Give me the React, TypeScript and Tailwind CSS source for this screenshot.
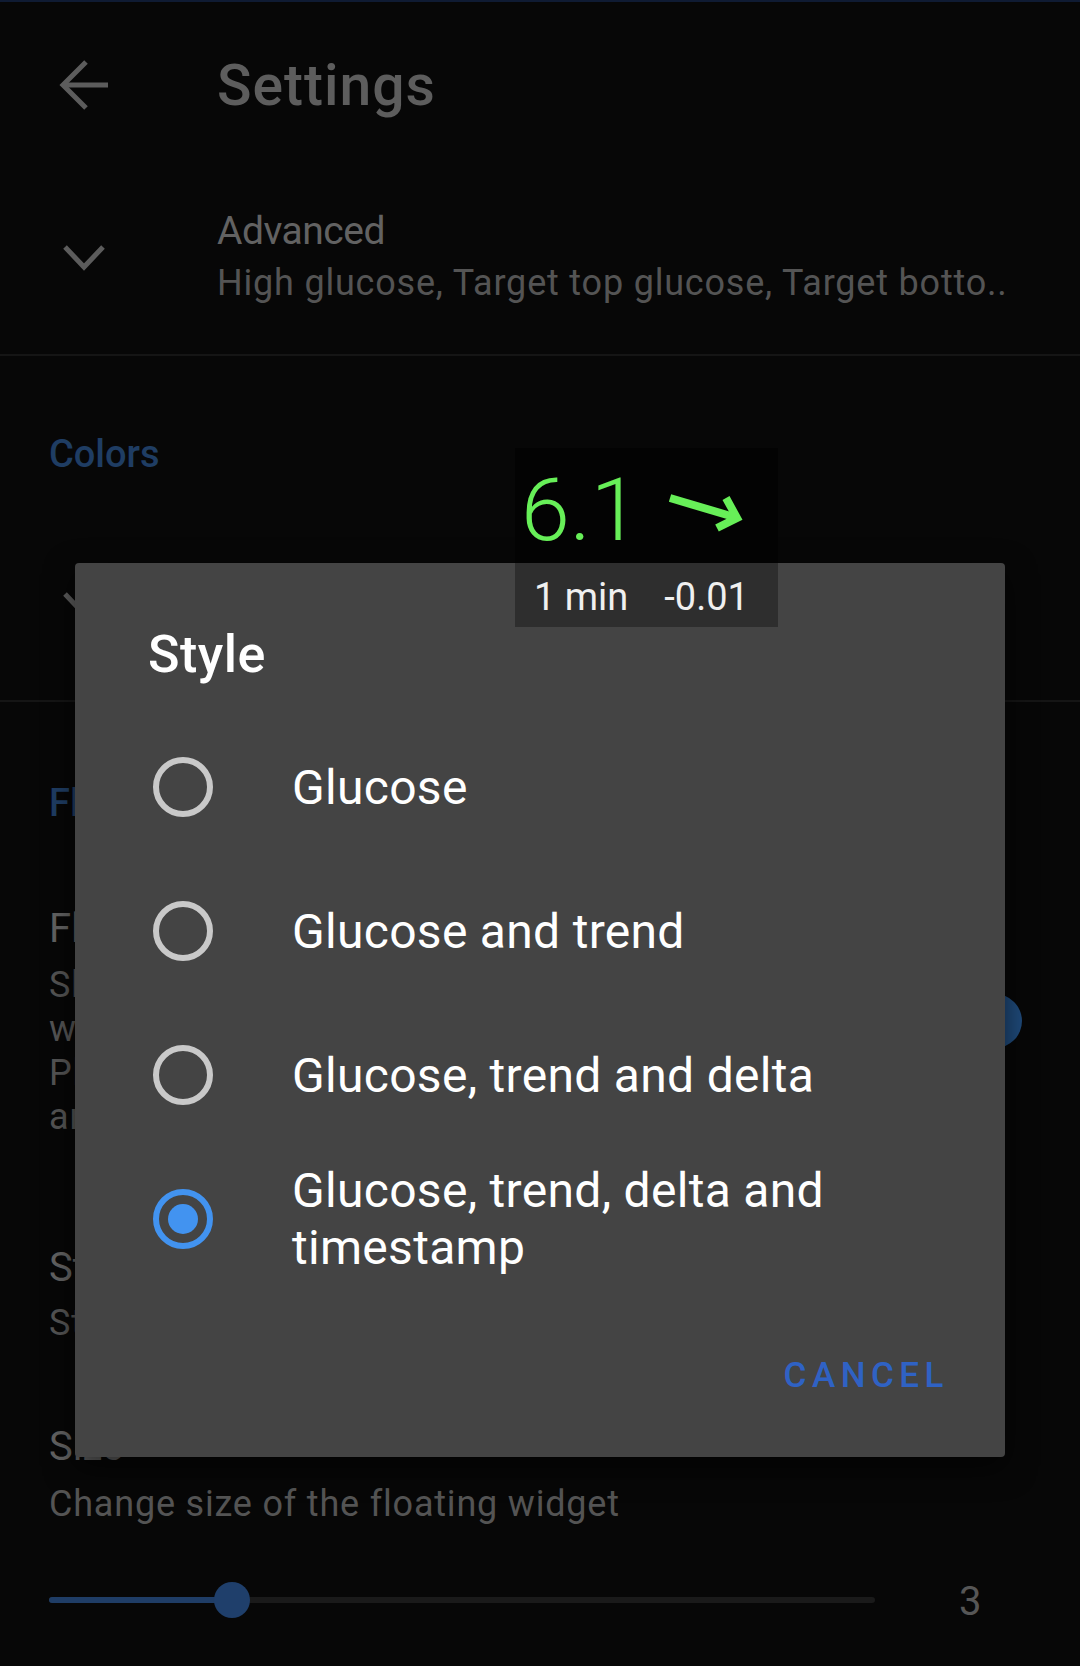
import React from "react";

function BackArrow() {
  return (
    <svg width="56" height="56" viewBox="0 0 56 56" fill="none">
      <path d="M52 28 H8" stroke="#5c5c5c" strokeWidth="5" />
      <path d="M30 5 L7 28 L30 51" stroke="#5c5c5c" strokeWidth="5" fill="none" />
    </svg>
  );
}

function ChevronDown() {
  return (
    <svg width="46" height="30" viewBox="0 0 46 30" fill="none">
      <path d="M4 5 L23 25 L42 5" stroke="#5c5c5c" strokeWidth="5" fill="none" />
    </svg>
  );
}

function Radio({ checked }: { checked?: boolean }) {
  if (checked) {
    return (
      <div className="w-[60px] h-[60px] rounded-full border-[6px] border-[#4293f0] flex items-center justify-center shrink-0">
        <div className="w-[30px] h-[30px] rounded-full bg-[#4293f0]" />
      </div>
    );
  }
  return <div className="w-[60px] h-[60px] rounded-full border-[6px] border-[#c9c9c9] shrink-0" />;
}

function TrendArrow() {
  return (
    <svg width="84" height="48" viewBox="0 0 84 48" fill="none">
      <path d="M6 9 L70 28" stroke="#67ef58" strokeWidth="8" strokeLinecap="butt" />
      <path d="M62 9 L73 29 L53 39" stroke="#67ef58" strokeWidth="8" fill="none" strokeLinejoin="miter" />
    </svg>
  );
}

export default function App() {
  const items = [
    { label: "Glucose", checked: false },
    { label: "Glucose and trend", checked: false },
    { label: "Glucose, trend and delta", checked: false },
  ];
  return (
    <div className="relative w-[1080px] h-[1666px] overflow-hidden bg-[#070707] font-['Roboto',sans-serif]">
      {/* top accent line */}
      <div className="h-[2px] bg-[#0f1b33]" />

      {/* Toolbar */}
      <div className="h-[166px] flex items-center">
        <div className="ml-[56px] w-[56px] h-[56px] flex items-center justify-center">
          <BackArrow />
        </div>
        <div className="ml-[105px] text-[57px] leading-none font-medium tracking-[1px] text-[#5d5d5d]">Settings</div>
      </div>

      {/* Advanced row */}
      <div className="flex items-center pt-[37px] pb-[45px]">
        <div className="w-[217px] flex justify-center pr-[50px]">
          <ChevronDown />
        </div>
        <div className="flex flex-col">
          <div className="text-[39px] leading-[52px] tracking-[-0.5px] text-[#626262]">Advanced</div>
          <div className="text-[36px] leading-[52px] tracking-[0.8px] text-[#545454] whitespace-nowrap">
            High glucose, Target top glucose, Target botto..
          </div>
        </div>
      </div>

      <div className="h-[2px] bg-[#151515]" />

      {/* Colors category */}
      <div className="pt-[76px] pl-[49px] text-[38px] leading-[44px] font-medium text-[#1f3d63]">Colors</div>

      {/* Colors row */}
      <div className="flex items-center pt-[32px] h-[224px]">
        <div className="w-[217px] flex justify-center pr-[50px]">
          <ChevronDown />
        </div>
        <div className="flex flex-col pt-[8px]">
          <div className="text-[39px] leading-[52px] text-[#626262]">Glucose colors</div>
          <div className="text-[36px] leading-[52px] text-[#545454] whitespace-nowrap">Glucose, background</div>
        </div>
      </div>

      <div className="h-[2px] bg-[#151515]" />

      {/* Floating widget category */}
      <div className="pt-[79px] pl-[49px] text-[38px] leading-[44px] font-medium text-[#1f3d63]">Floating widget</div>

      {/* Floating switch row */}
      <div className="flex items-center pt-[78px] pl-[49px] pr-[58px]">
        <div className="flex-1 flex flex-col">
          <div className="text-[40px] leading-[52px] text-[#626262]">Floating widget</div>
          <div className="mt-[8px] text-[36px] leading-[44px] tracking-[0.8px] text-[#545454] whitespace-nowrap">
            <div>Show floating widget with glucose</div>
            <div>when the app is in background.</div>
            <div>Please allow display over other apps</div>
            <div>and disable battery optimization.</div>
          </div>
        </div>
        <div className="relative w-[90px] h-[54px] flex items-center justify-end">
          <div className="absolute left-[8px] right-[8px] top-[13px] h-[28px] rounded-full bg-[#15283f]" />
          <div className="relative w-[54px] h-[54px] rounded-full bg-[#1f4a7a]" />
        </div>
      </div>

      {/* Style row */}
      <div className="pt-[103px] pl-[49px]">
        <div className="text-[40px] leading-[52px] text-[#626262]">Style</div>
        <div className="mt-[7px] text-[36px] leading-[44px] tracking-[0.8px] text-[#545454]">Style of the floating widget</div>
      </div>

      {/* Size row */}
      <div className="pt-[76px] pl-[49px]">
        <div className="text-[40px] leading-[52px] text-[#626262]">Size</div>
        <div className="mt-[9px] text-[36px] leading-[44px] tracking-[0.8px] text-[#545454]">Change size of the floating widget</div>
      </div>

      {/* Slider */}
      <div className="h-[148px] flex items-center pl-[49px]">
        <div className="relative w-[826px] h-[6px] bg-[#1a1a1a] rounded-full">
          <div className="absolute left-0 top-0 h-[6px] w-[183px] bg-[#1f3d66] rounded-full" />
          <div className="absolute left-[165px] top-[-15px] w-[36px] h-[36px] rounded-full bg-[#1f3f6b]" />
        </div>
        <div className="ml-[84px] pt-[4px] text-[40px] leading-none text-[#565656]">3</div>
      </div>

      {/* Dialog */}
      <div className="absolute left-[75px] top-[563px] w-[930px] h-[894px] bg-[#444444] rounded-[4px] shadow-[0_10px_30px_rgba(0,0,0,0.6)] flex flex-col">
        <div className="pt-[60px] pl-[73px] text-[52px] leading-[64px] font-medium tracking-[0.5px] text-white">Style</div>
        <div className="mt-[28px] flex flex-col">
          {items.map((it) => (
            <div key={it.label} className="h-[144px] flex items-center pl-[78px]">
              <Radio checked={it.checked} />
              <div className="ml-[79px] text-[48px] leading-[57px] tracking-[0.3px] text-white">{it.label}</div>
            </div>
          ))}
          <div className="h-[144px] flex items-center pl-[78px]">
            <Radio checked />
            <div className="ml-[79px] text-[48px] leading-[57px] tracking-[0.3px] text-white">
              Glucose, trend, delta and
              <br />
              timestamp
            </div>
          </div>
        </div>
        <div className="mt-[63px] flex justify-end pr-[56px]">
          <div className="text-[35px] leading-[44px] font-medium tracking-[5.5px] text-[#2f62c4]">CANCEL</div>
        </div>
      </div>

      {/* Floating glucose widget */}
      <div className="absolute left-[515px] top-[448px] w-[263px] h-[179px] flex flex-col">
        <div className="relative h-[115px] bg-[#030303] pl-[6px]">
          <div className="pt-[17px] text-[88px] leading-[90px] font-light text-[#67ef58]">6.1</div>
          <div className="absolute left-[149px] top-[41px]">
            <TrendArrow />
          </div>
        </div>
        <div className="h-[64px] bg-[#2e2e2e] flex items-center pt-[4px] pl-[19px] gap-[36px] text-[38px] leading-none text-[#f0f0f0]">
          <span>1 min</span>
          <span>-0.01</span>
        </div>
      </div>
    </div>
  );
}
